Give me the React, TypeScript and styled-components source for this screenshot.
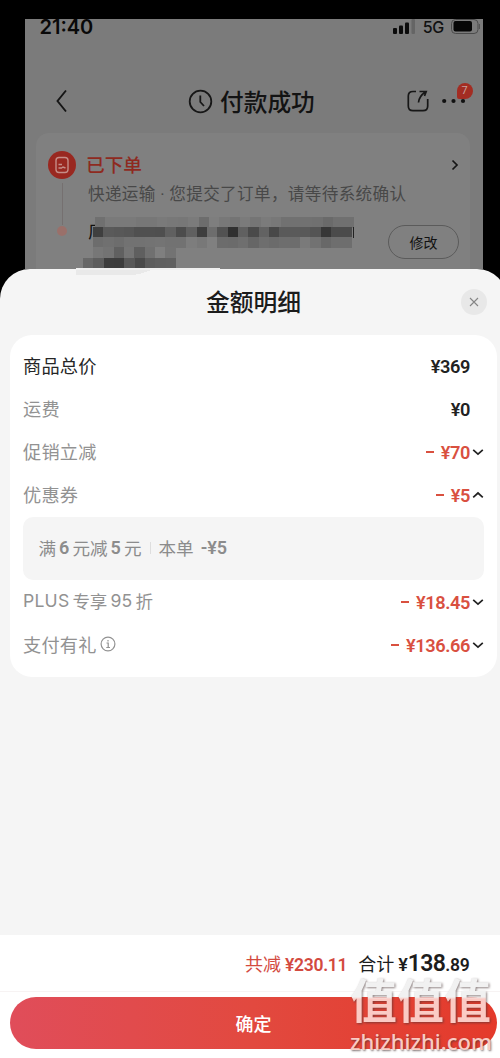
import React from 'react';
import styled, { createGlobalStyle } from 'styled-components';

const Global = createGlobalStyle`
  * { box-sizing: border-box; }
  body {
    margin: 0;
    background: #000;
    font-family: Roboto, "Noto Sans CJK SC", sans-serif;
    overflow: hidden;
  }
`;

const Screen = styled.div`
  position: relative;
  width: 500px;
  height: 1058px;
  overflow: hidden;
  background: #000;
  display: flex;
  flex-direction: column;
`;

const Backdrop = styled.div`
  flex: none;
  width: 458px;
  height: 250px;
  margin: 19px 0 0 24.5px;
  background: #7b7b7b;
  overflow: hidden;
`;

const StatusBar = styled.div`
  display: flex;
  justify-content: space-between;
  height: 19px;
  padding: 0 2px 0 15px;
`;

const Clock = styled.span`
  font: 600 20px/20px Inter, sans-serif;
  letter-spacing: 0;
  color: #090909;
  margin-top: -2px;
`;

const StatusRight = styled.div`
  display: flex;
  align-items: flex-start;
`;

const Network = styled.span`
  font: 500 16px/16px Inter, sans-serif;
  letter-spacing: -0.6px;
  color: #111;
  margin: 0 7px 0 8px;
`;

const NavBar = styled.div`
  display: flex;
  align-items: center;
  height: 50px;
  margin-top: 38px;
  padding: 0 11px 0 28.5px;
`;

const NavTitle = styled.div`
  display: flex;
  align-items: center;
  gap: 7px;
  margin-left: 119px;
  font-size: 23.7px;
  font-weight: 500;
  color: #131313;
  white-space: nowrap;
  line-height: 30px;
  span { padding-top: 3px; }
`;

const NavActions = styled.div`
  display: flex;
  align-items: center;
  margin-left: auto;
  gap: 13px;
`;

const More = styled.div`
  position: relative;
  width: 30px;
  height: 24px;
`;

const Badge = styled.span`
  position: absolute;
  left: 15px;
  top: -6px;
  width: 16px;
  height: 16px;
  border-radius: 8px 8px 8px 2px;
  background: #a32c22;
  color: #c6a29f;
  font-size: 11px;
  line-height: 16px;
  text-align: center;
`;

const StatusCard = styled.div`
  position: relative;
  margin: 7px 12.5px 0 11.5px;
  height: 150px;
  border-radius: 13px 13px 0 0;
  background: #808080;
  display: flex;
  padding: 18px 11px 0 12px;
`;

const Timeline = styled.div`
  display: flex;
  flex-direction: column;
  align-items: center;
  width: 28px;
`;

const Line = styled.div`
  width: 1px;
  height: 42px;
  margin: 4px 0 1px;
  background: #757070;
`;

const Dot = styled.div`
  width: 10px;
  height: 10px;
  border-radius: 50%;
  background: #9a706a;
`;

const CardBody = styled.div`
  position: relative;
  flex: 1;
  padding-left: 10px;
`;

const StateRow = styled.div`
  display: flex;
  align-items: center;
  justify-content: space-between;
  height: 28px;
  font-size: 18.7px;
  font-weight: 500;
  color: #8e2a1f;
  span { padding-bottom: 3px; }
`;

const Note = styled.div`
  margin: 4px 0 0 2px;
  font-size: 16.6px;
  line-height: 24px;
  color: #484848;
  white-space: pre;
  letter-spacing: 0.34px;
`;

const Name = styled.div`
  margin: 14px 0 0 2px;
  font-size: 17px;
  line-height: 22px;
  color: #101010;
`;

const EditButton = styled.button`
  position: absolute;
  right: 0;
  top: 74px;
  width: 71px;
  height: 34px;
  border: 1px solid #5b5b5b;
  border-radius: 17px;
  background: none;
  padding: 0;
  font: 400 14px/30px "Noto Sans CJK SC", sans-serif;
  color: #121212;
`;

const Mosaic = styled.svg`
  position: absolute;
  left: 76px;
  top: 216px;
`;

const Sheet = styled.section`
  flex: 1;
  width: 507px;
  border-radius: 30px 30px 0 0;
  background: #f5f5f5;
  display: flex;
  flex-direction: column;
`;

const SheetHeader = styled.header`
  position: relative;
  height: 65.5px;
  padding-bottom: 2px;
  display: flex;
  justify-content: center;
  align-items: center;
  font-size: 23.8px;
  font-weight: 500;
  color: #1c1c1c;
`;

const Close = styled.button`
  position: absolute;
  left: 460.5px;
  top: 19.5px;
  width: 26px;
  height: 26px;
  border: 0;
  border-radius: 50%;
  background: #e8e8e8;
  display: grid;
  place-items: center;
  padding: 0;
`;

const Details = styled.div`
  width: 487px;
  height: 342px;
  margin-left: 10px;
  padding: 10px 13px 0;
  border-radius: 22px;
  background: #fff;
`;

const Row = styled.div`
  display: flex;
  align-items: center;
  height: 43px;
`;

const Label = styled.span<{ $dark?: boolean }>`
  display: flex;
  align-items: center;
  gap: 3px;
  flex: 1;
  padding-bottom: 2px;
  font: 400 18.2px/26px "Noto Sans CJK SC", sans-serif;
  letter-spacing: 0.2px;
  color: ${(p) => (p.$dark ? '#262626' : '#929292')};
`;

const Mixed = styled.span`
  font-size: 17.5px;
  letter-spacing: 0;
`;

const Latin = styled.span`
  font-family: Inter, sans-serif;
  font-size: 17.6px;
`;

const Amount = styled.span<{ $red?: boolean }>`
  font-size: 18.2px;
  font-weight: 600;
  color: ${(p) => (p.$red ? '#d9503f' : '#222')};
  letter-spacing: -0.4px;
  white-space: pre;
`;

const Minus = styled.i`
  display: inline-block;
  width: 8px;
  height: 2px;
  margin-right: 7px;
  vertical-align: 6px;
  background: currentColor;
`;

const Toggle = styled.span`
  display: flex;
  justify-content: flex-end;
  width: 14px;
`;

const Coupon = styled.div`
  display: flex;
  align-items: center;
  height: 63px;
  margin: 0.5px 0;
  padding: 0 0 1px 15.5px;
  border-radius: 10px;
  background: #f5f5f5;
  font: 400 17.6px/26px "Noto Sans CJK SC", sans-serif;
  color: #8c8c8c;
  white-space: pre;
  b {
    font: 600 18px/26px Roboto, sans-serif;
    margin: 0 3px;
  }
`;

const Separator = styled.i`
  width: 1px;
  height: 12px;
  margin: 0 8px;
  background: #dedede;
`;

const Summary = styled.div`
  display: flex;
  align-items: center;
  height: 57px;
  margin-top: auto;
  padding-left: 245px;
  background: #fff;
  border-bottom: 1px solid #f7f3f3;
  white-space: nowrap;
`;

const Saved = styled.span`
  font-size: 18px;
  color: #d34a3f;
  b { font-weight: 600; font-size: 17.5px; margin-left: 4px; letter-spacing: -0.3px; }
`;

const Total = styled.span`
  margin-left: 11px;
  font-size: 18px;
  color: #1c1c1c;
  b { font-weight: 600; font-size: 18px; margin-left: 4px; }
  strong { font-weight: 600; font-size: 23px; letter-spacing: -0.7px; }
  small { font-weight: 600; font-size: 17.5px; letter-spacing: -0.2px; }
`;

const Footer = styled.footer`
  height: 66px;
  padding: 5px 0 0 10px;
  background: #fff;
`;

const Confirm = styled.button`
  display: block;
  width: 487px;
  height: 52px;
  border: 0;
  border-radius: 26px;
  background: linear-gradient(90deg, #e04d5a 0%, #e2493f 50%, #e43a2b 100%);
  color: #fff;
  font: 500 18px/50px "Noto Sans CJK SC", sans-serif;
  padding: 0;
`;

const Watermark = styled.div`
  position: absolute;
  left: 350px;
  top: 971px;
  width: 150px;
  color: #f9cbc4;
  text-shadow: 1px 1px 2px rgba(70, 50, 50, 0.7);
`;

const Mark = styled.div`
  font: 700 47px/54px "Noto Sans CJK SC", sans-serif;
  white-space: nowrap;
  background: linear-gradient(#f1f1f1 48%, #fbcac4 52%);
  background-clip: text;
  -webkit-text-fill-color: transparent;
  text-shadow: none;
  filter: drop-shadow(1px 1px 1px rgba(70, 50, 50, 0.6));
`;

const Site = styled.div`
  margin-top: 1px;
  font: 500 22px/30px "Noto Sans", sans-serif;
  letter-spacing: 0;
`;

const Chevron = ({ up = false }: { up?: boolean }) => (
  <svg width="12" height="8" viewBox="0 0 12 8" fill="none" stroke="#222" strokeWidth="1.7">
    <path d={up ? 'M1.2 6.3 6 2l4.8 4.3' : 'M1.2 1.8 6 6.1l4.8-4.3'} />
  </svg>
);

// Grey levels of the privacy mask, one list per line of blocks.
const mask: { x: number; y: number; tones: string[] }[] = [
  { x: 19, y: 1, tones: '70 7a 7a 7a 77 77 7a 78 77 7b 6d 7e 78 74 7b 75 7b 78 71 71 71 70 6a 70 70'.split(' ') },
  { x: 17, y: 11, tones: '3f 5a 58 56 50 50 4f 60 4c 60 3e 6d 52 30 60 4a 62 48 5a 5a 59 54 37 4b 4b'.split(' ') },
  { x: 17, y: 21, tones: '6d 70 6d 72 72 73 74 72 72 7d 78 80 6c 6b 6f 66 6e 6b 6e 6d 7a 72 68 6e 6e'.split(' ') },
  { x: 17, y: 31, tones: '77 73 60 74 5f 70 7f 73'.split(' ') },
  { x: 7, y: 42, tones: '68 5e 3e 3d 59 4a 5c 5f 60'.split(' ') },
];

const PrivacyMask = () => (
  <Mosaic width="290" height="60" viewBox="0 0 290 60" shapeRendering="crispEdges">
    {mask.map((line) =>
      line.tones.map((t, i) => (
        <rect key={`${line.y}-${i}`} x={line.x + i * 10.35} y={line.y} width="10.6" height="10.5" fill={`#${t}${t}${t}`} />
      )),
    )}
    <path d="M277 11V22" stroke="#222" />
    <path d="M0 53V52H144V53.5H76Q65 58.500 55 59H0Z" fill="#e9e9e9" />
    <path d="M0 52H144V53.5H0Z" fill="#f0f0f0" />
  </Mosaic>
);

type Item = { label: React.ReactNode; value: string; red?: boolean; dark?: boolean; open?: boolean };

const DetailRow = ({ label, value, red, dark, open }: Item) => (
  <Row>
    <Label $dark={dark}>{label}</Label>
    <Amount $red={red}>{red && <Minus />}{value}</Amount>
    <Toggle>{red && <Chevron up={open} />}</Toggle>
  </Row>
);

const InfoIcon = () => (
  <svg width="16" height="16" viewBox="0 0 16 16" fill="none" stroke="#929292" strokeWidth="1.2">
    <circle cx="8" cy="8" r="6.9" />
    <path d="M6.5 7H8.200V11.500M6.300 11.500H10M8 4V5.500" />
  </svg>
);

export default function App() {
  return (
    <Screen>
      <Global />
      <Backdrop>
        <StatusBar>
          <Clock>21:40</Clock>
          <StatusRight>
            <svg width="22" height="16" viewBox="0 0 22 16" fill="#0b0b0b">
              <rect x="0" y="9" width="4" height="6" rx="1" />
              <rect x="6" y="6.500" width="4" height="8.500" rx="1" />
              <rect x="12" y="3.500" width="4" height="11.500" rx="1" />
              <rect x="18.500" y="0" width="3.500" height="15" rx="1" fill="#656565" />
            </svg>
            <Network>5G</Network>
            <svg width="30" height="16" viewBox="0 0 30 16">
              <rect x="0.500" y="0.500" width="26.500" height="14" rx="4" fill="none" stroke="#4b4b4b" />
              <rect x="2.500" y="2" width="18.500" height="10.500" rx="2" fill="#060606" />
              <path d="M28.500 5v5" stroke="#555" />
            </svg>
          </StatusRight>
        </StatusBar>
        <NavBar>
          <svg width="16" height="24" viewBox="0 0 16 24" fill="none" stroke="#151515" strokeWidth="1.9">
            <path d="M13 1.500 4.500 12 13 22.500" />
          </svg>
          <NavTitle>
            <svg width="25" height="25" viewBox="0 0 25 25" fill="none" stroke="#171717" strokeWidth="1.800">
              <circle cx="12.500" cy="12.500" r="10.800" />
              <path d="M12.300 6.500V13L16 17" />
            </svg>
            <span>付款成功</span>
          </NavTitle>
          <NavActions>
            <svg width="22" height="22" viewBox="0 0 22 22" fill="none" stroke="#171717" strokeWidth="1.700">
              <path d="M9 1.500H6Q1.300 1.500 1.300 6V16Q1.300 20.700 6 20.700H16Q20.700 20.700 20.700 16V9M11.500 12.500Q12 6.500 18.500 1.800M12.500 1.500H19.200L17.500 6" />
            </svg>
            <More>
              <svg width="30" height="24" viewBox="0 0 30 24" fill="#111">
                <circle cx="2.200" cy="12" r="2.100" />
                <circle cx="11.500" cy="12" r="2.100" />
                <circle cx="21" cy="12" r="2.100" />
              </svg>
              <Badge>7</Badge>
            </More>
          </NavActions>
        </NavBar>
        <StatusCard>
          <Timeline>
            <svg width="28" height="28" viewBox="0 0 28 28" fill="none" stroke="#c58d87" strokeWidth="1.400">
              <circle cx="14" cy="14" r="14" fill="#992820" stroke="none" />
              <rect x="8" y="6.500" width="12" height="15" rx="3" />
              <path d="M10.500 13.500H14M10.500 17H13.500L15 16L17.500 17" />
            </svg>
            <Line />
            <Dot />
          </Timeline>
          <CardBody>
            <StateRow>
              <span>已下单</span>
              <svg width="8" height="12" viewBox="0 0 8 12" fill="none" stroke="#151515" strokeWidth="1.700">
                <path d="M1.500 1.500 6 6 1.500 10.500" />
              </svg>
            </StateRow>
            <Note>快递运输 · 您提交了订单，请等待系统确认</Note>
            <Name>厂</Name>
            <EditButton>修改</EditButton>
          </CardBody>
        </StatusCard>
      </Backdrop>
      <Sheet>
        <SheetHeader>
          金额明细
          <Close aria-label="关闭">
            <svg width="10" height="10" viewBox="0 0 10 10" stroke="#858585" strokeWidth="1.100">
              <path d="M1 1 9 9M9 1 1 9" />
            </svg>
          </Close>
        </SheetHeader>
        <Details>
          <DetailRow label="商品总价" value="¥369" dark />
          <DetailRow label="运费" value="¥0" />
          <DetailRow label="促销立减" value="¥70" red />
          <DetailRow label="优惠券" value="¥5" red open />
          <Coupon>
            满<b>6</b>元减<b>5</b>元<Separator />本单 <b>-¥5</b>
          </Coupon>
          <DetailRow label={<><Latin>PLUS</Latin><Mixed>专享</Mixed><Latin>95</Latin><Mixed>折</Mixed></>} value="¥18.45" red />
          <DetailRow label={<>支付有礼<InfoIcon /></>} value="¥136.66" red />
        </Details>
        <Summary>
          <Saved>共减<b>¥230.11</b></Saved>
          <Total>合计<b>¥</b><strong>138</strong><small>.89</small></Total>
        </Summary>
        <Footer>
          <Confirm>确定</Confirm>
        </Footer>
      </Sheet>
      <PrivacyMask />
      <Watermark>
        <Mark>值值值</Mark>
        <Site>zhizhizhi.com</Site>
      </Watermark>
    </Screen>
  );
}
